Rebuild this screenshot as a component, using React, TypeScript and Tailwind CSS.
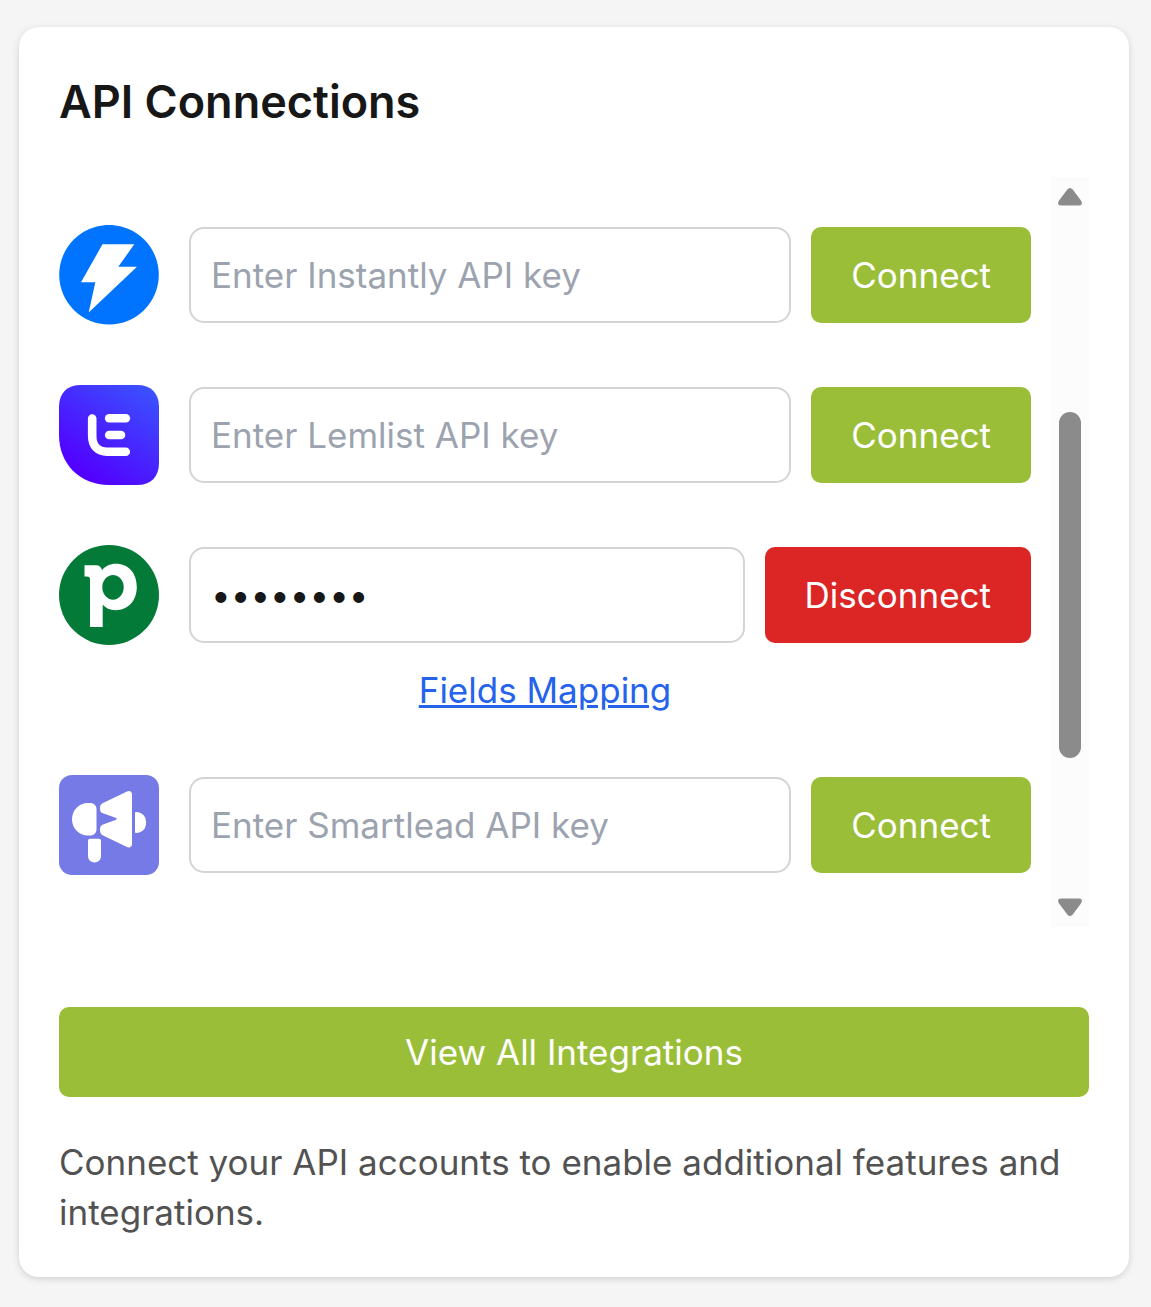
import type { ReactNode } from 'react'
import clsx from 'clsx'

type Integration = {
    id: string
    name: string
    logo: ReactNode
    apiKey?: string
    hasMapping?: boolean
}

const InstantlyLogo = () => (
    <svg viewBox="0 0 100 100" className="size-[100px] shrink-0">
        <circle cx="50" cy="49.700" r="49.800" fill="#0074ff" />
        <path d="M43.5 19.3H75.300L59.300 41.700H78L29.700 87.5L36.3 57.300H22Z" fill="#fff" />
    </svg>
)

const LemlistLogo = () => (
    <svg viewBox="0 0 100 100" className="size-[100px] shrink-0">
        <defs>
            <linearGradient id="lemlist" x1="22" y1="88" x2="88" y2="-4" gradientUnits="userSpaceOnUse">
                <stop offset="0" stopColor="#5200ff" />
                <stop offset="1" stopColor="#3a55ff" />
            </linearGradient>
        </defs>
        <path d="M22 0H78C92 0 100 8 100 22V78C100 92 92 100 78 100H50C21 100 0 79 0 50V22C0 8 8 0 22 0Z" fill="url(#lemlist)" />
        <g fill="none" stroke="#fff" strokeWidth="8.6" strokeLinecap="round">
            <path d="M33.2 33.5V51C33.2 61 39 66.7 48 66.7H66.8" />
            <path d="M50.2 33.2H66.8" />
            <path d="M50.2 50H62" />
        </g>
    </svg>
)

const PipedriveLogo = () => (
    <svg viewBox="0 0 100 100" className="size-[100px] shrink-0">
        <circle cx="50" cy="50" r="50" fill="#047a38" />
        <path
            fillRule="evenodd"
            d="M25.5 20.300H37C40.5 20.300 42.5 22.300 43 25.300C46 21.300 51 18.800 57 18.800C69.500 18.800 77.800 28.300 77.800 42C77.800 55.800 69 65.200 56.600 65.200C51 65.200 46.500 63 43.700 59.500V82H31V34.500C31 32.300 30 31.500 28 31.500H25.500ZM54 29.900A10.700 12.400 0 1 0 54 54.700A10.700 12.400 0 1 0 54 29.900Z"
            fill="#fff"
        />
    </svg>
)

const SmartleadLogo = () => (
    <svg viewBox="0 0 100 100" className="size-[100px] shrink-0">
        <rect width="100" height="100" rx="13" fill="#757ae6" />
        <g fill="#fff">
            <path d="M29 28H31C35 28 37.500 30.500 37.500 34.500V54C37.500 58 35 60.500 31 60.500H29C20 60.500 13 53.500 13 44.300C13 35 20 28 29 28Z" />
            <path d="M31 63.700H40Q42 63.700 42 65.700V81C42 89.500 29 89.500 29 81V65.700Q29 63.700 31 63.700Z" />
            <path d="M67.500 16.700C70.500 15.300 73 16.500 73 19.500V69C73 72 70.500 73.200 67.500 71.800L44 60.500C41.800 59.400 41 57.500 41 55V54C41 51.500 42 50.200 44 49.400L56.500 45C58.300 44.300 58.300 43.500 56.500 42.800L44 38.300C42 37.500 41 36.500 41 34V32.500C41 30.500 42 29 44 28Z" />
            <path d="M77 37C90.500 37 90.500 58 77 58Q76 58 76 57V38Q76 37 77 37Z" />
        </g>
    </svg>
)

const integrations: Integration[] = [
    { id: 'instantly', name: 'Instantly', logo: <InstantlyLogo /> },
    { id: 'lemlist', name: 'Lemlist', logo: <LemlistLogo /> },
    { id: 'pipedrive', name: 'Pipedrive', logo: <PipedriveLogo />, apiKey: 'pd-token', hasMapping: true },
    { id: 'smartlead', name: 'Smartlead', logo: <SmartleadLogo /> },
]

function IntegrationRow({ integration }: { integration: Integration }) {
    const { name, logo, apiKey, hasMapping } = integration
    const connected = Boolean(apiKey)

    return (
        <div>
            <div className="flex items-center">
                {logo}
                <input
                    type={connected ? 'password' : 'text'}
                    defaultValue={apiKey}
                    placeholder={`Enter ${name} API key`}
                    className="ml-[30px] h-24 min-w-0 flex-1 rounded-[15px] border-2 border-[#d4d4d4] bg-white px-5 text-[#171717] placeholder:text-[#9ca3af]"
                />
                <button
                    className={clsx(
                        'ml-5 h-24 shrink-0 rounded-[10px] px-10 text-white',
                        connected ? 'bg-[#dc2626]' : 'bg-[#9abe38]'
                    )}
                >
                    {connected ? 'Disconnect' : 'Connect'}
                </button>
            </div>
            {hasMapping && (
                <div className="mt-5 h-[50px] text-center leading-[50px]">
                    <a href="#" className="text-[#2563eb] underline">Fields Mapping</a>
                </div>
            )}
        </div>
    )
}

function Scrollbar() {
    return (
        <div className="flex w-[38px] shrink-0 flex-col items-center bg-[#fcfcfc]">
            <svg viewBox="0 0 24 18" className="mt-[11px] h-[18px] w-6 fill-[#8b8b8b]">
                <path d="M9.300 1.500Q12 -1.500 14.700 1.500L23.300 13Q25 17.500 21 17.500H3Q-1 17.500 0.700 13Z" />
            </svg>
            <div className="mt-[206px] h-[346px] w-[22px] rounded-full bg-[#8b8b8b]" />
            <svg viewBox="0 0 24 18" className="mt-auto mb-[11px] h-[18px] w-6 rotate-180 fill-[#8b8b8b]">
                <path d="M9.300 1.500Q12 -1.500 14.700 1.500L23.300 13Q25 17.500 21 17.500H3Q-1 17.500 0.700 13Z" />
            </svg>
        </div>
    )
}

export default function App() {
    return (
        <div className="h-[1307px] bg-[#f5f5f5] pt-[27px] pr-[22px] pl-[19px] font-['Inter',sans-serif] text-[35px]">
            <div className="h-[1250px] rounded-[20px] bg-white px-10 pt-10 shadow-[0_2px_7px_rgba(0,0,0,0.15)]">
                <h2 className="text-[45px] leading-[70px] font-semibold text-[#171717]">API Connections</h2>

                <div className="mt-10 flex h-[750px]">
                    <div className="flex min-w-0 flex-1 flex-col gap-[60px] pt-12 pr-5">
                        {integrations.map(integration => (
                            <IntegrationRow key={integration.id} integration={integration} />
                        ))}
                    </div>
                    <Scrollbar />
                </div>

                <button className="mt-20 block h-[90px] w-full rounded-[10px] bg-[#9abe38] text-white">
                    View All Integrations
                </button>

                <p className="mt-10 leading-[50px] text-[#525252]">
                    Connect your API accounts to enable additional features and integrations.
                </p>
            </div>
        </div>
    )
}
